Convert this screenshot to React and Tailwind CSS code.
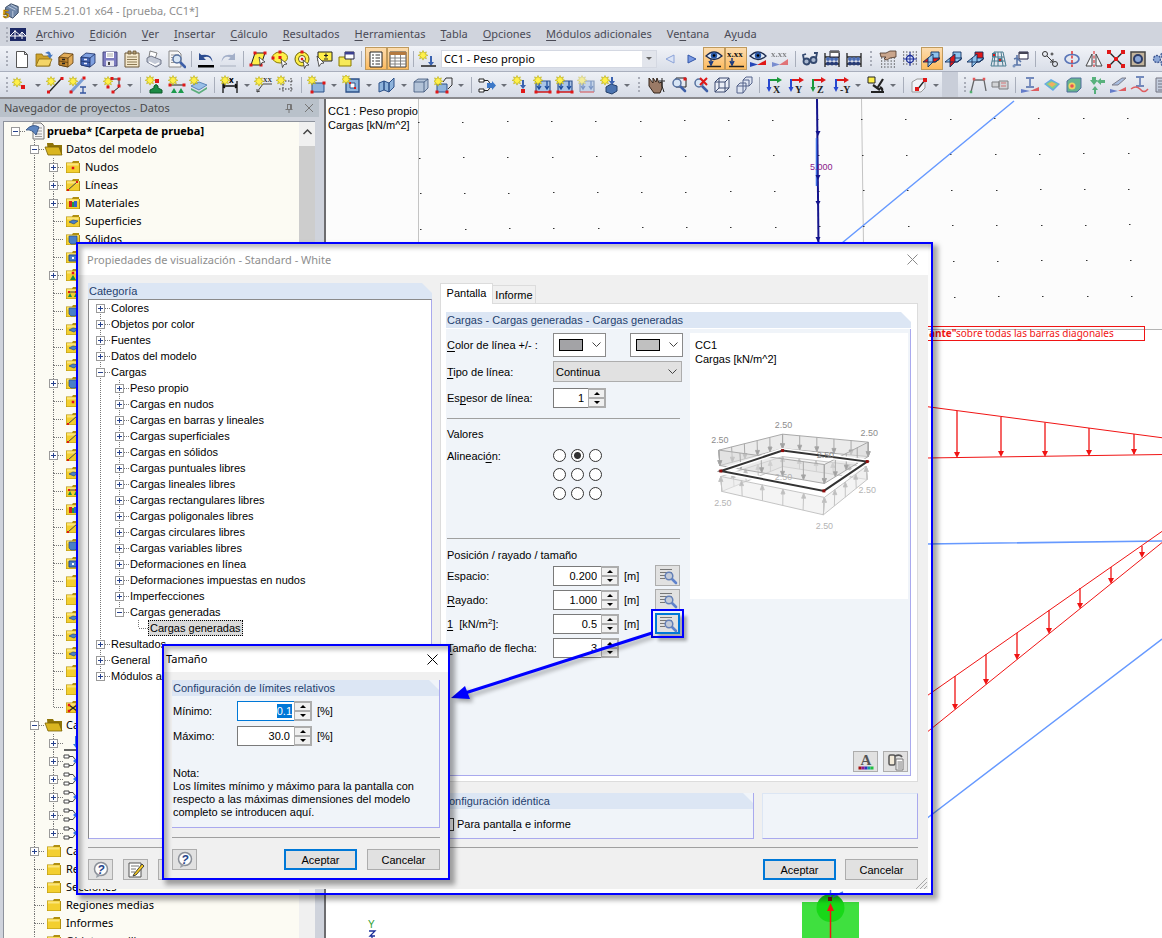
import { useEffect, useRef } from 'react';

/* ---------- small pieces shared by the icons ---------- */

const Star = ({ x = 5, y = 5 }) => (
  <g stroke="#b5a800" strokeWidth="0.6">
    <path
      d={`M${x} ${y - 4.5}l1 2.4 2.4-1-1 2.4 2.4 1-2.4 1 1 2.4-2.4-1-1 2.4-1-2.4-2.4 1 1-2.4-2.4-1 2.4-1-1-2.4 2.4 1z`}
      fill="#fff04a"
    />
  </g>
);

const Dot = ({ x, y, s = 3, c = '#e01818' }) => <rect x={x - s / 2} y={y - s / 2} width={s} height={s} fill={c} />;

const DownArrow = ({ x, y, h = 8, c = '#3a62b0' }) => (
  <path d={`M${x} ${y}v${h - 3}h2l-3 4-3-4h2v-${h - 3}z`} fill={c} />
);

const Folder = ({ children }) => (
  <>
    <path d="M3 5.500h6l1-1.500h6v2h1v10H3z" fill="#b08f10" />
    <path d="M3.500 6h12.500v9.500H3.500z" fill="#f3cf2f" />
    <path d="M4 6.500h11.500v2H4z" fill="#fae57c" />
    {children}
  </>
);

const Cube = ({ fill = '#7fa3cf' }) => (
  <g stroke="#3c5378" strokeWidth="0.8">
    <path d="M3 7l4-3h10v9l-4 4H3z" fill={fill} />
    <path d="M3 7h10v10M13 7l4-3" fill="none" />
  </g>
);

const Dots = ({ x = 3, y = 3 }) => (
  <path
    d={`M${x} ${y}h14M${x} ${y + 3}h14M${x} ${y + 6}h14M${x} ${y + 9}h14M${x} ${y + 12}h14`}
    stroke="#333"
    strokeWidth="1.2"
    strokeDasharray="1.200 2"
  />
);

const Planes = ({ flat = '#8fc4ee', side = '#8fc4ee', front = '#8fc4ee' }) => (
  <g stroke="#12305e" strokeWidth="0.9">
    <path d="M9 3h8v8H9z" fill={front} />
    <path d="M1 13l5-4h12l-5 4z" fill={flat} />
    <path d="M6 9l5-4v8l-5 5z" fill={side} />
    <path d="M6 13h8l3-3" fill="none" />
  </g>
);

const Lens = ({ x = 9, y = 8 }) => (
  <>
    <path d={`M${x + 3} ${y + 3}l5 5`} stroke="#3d5fa8" strokeWidth="2.600" strokeLinecap="round" />
    <circle cx={x} cy={y} r="4" fill="#d8e6f5" stroke="#56719f" strokeWidth="1.500" />
  </>
);

const Eye = ({ y = 7 }) => (
  <>
    <path d={`M2 ${y}q8-8 16 0q-8 7-16 0z`} fill="#dfeaf8" stroke="#1d2c50" strokeWidth="1.300" />
    <circle cx="10" cy={y - 0.5} r="3.200" fill="#2858a8" />
    <circle cx="10" cy={y - 0.5} r="1.300" fill="#000" />
  </>
);

const Axes = ({ label, right, down }) => (
  <>
    <path d="M4 4h9v-2l5 3-5 3v-2H4z" fill={right} />
    <path d="M4 4h2v8h1.500l-2.500 5-2.500-5H4z" fill={down} />
    <text x="9" y="18" fontSize="10" fontFamily="Liberation Serif, serif" fontWeight="bold" fill="#222">
      {label}
    </text>
  </>
);

const LoadFrame = ({ faded }) => (
  <g opacity={faded ? 0.5 : 1}>
    <path d="M3 17V6h14v11" fill="#a9c4e6" stroke="#35568c" strokeWidth="1.200" />
    <path d="M6 6v7m-2-2l2 3 2-3M14 6v7m-2-2l2 3 2-3" stroke="#1c4da0" strokeWidth="1.300" fill="none" />
    <path d="M3 17h14" stroke="#d01818" strokeWidth="1.500" />
    <Star x={5} y={5} />
    {!faded && <Dot x={3} y={17} />}
    {!faded && <Dot x={17} y={17} />}
  </g>
);

const Abacus = () => (
  <>
    <path d="M3 4v14M17 4v14M3 8h14M3 15h14" stroke="#222" strokeWidth="1.300" />
    {[6, 10, 14].map((x) => (
      <g key={x}>
        <circle cx={x} cy="10" r="2" fill="#4a6cb4" />
        <circle cx={x} cy="14.500" r="2" fill="#273c78" />
      </g>
    ))}
  </>
);

const icons = {
  new: <path d="M4.500 2.500h8l3 3v13h-11zM12.500 2.500v3h3" fill="#fff" stroke="#555" />,
  open: (
    <>
      <path d="M2 5h6l1 2h7v10H2z" fill="#cfa32c" stroke="#8a6a10" strokeWidth="0.800" />
      <path d="M2 17l3-7h13l-3 7z" fill="#f4d568" stroke="#8a6a10" strokeWidth="0.800" />
      <path d="M11 4q5-4 6 2l2-.5-3 4-3-3 2-.3q-1-2-4-2.200z" fill="#4679c2" />
    </>
  ),
  drawerBrown: (
    <g stroke="#5a3a0c" strokeWidth="0.800">
      <path d="M3 8l5-4 9 1v9l-5 4-9-2z" fill="#e2ac58" />
      <path d="M3 8l9 1v9l-9-2zM12 9l5-4M3 12l9 1.500" fill="#c08630" />
      <path d="M6 10.500h3M6 14.500h3" stroke="#222" strokeWidth="1.400" />
    </g>
  ),
  drawerBlue: (
    <g stroke="#1b2f66" strokeWidth="0.800">
      <path d="M3 8l5-4 9 1v9l-5 4-9-2z" fill="#7fa0e0" />
      <path d="M3 8l9 1v9l-9-2zM12 9l5-4M3 12l9 1.500" fill="#4466b4" />
      <path d="M6 10.500h3M6 14.500h3" stroke="#eef" strokeWidth="1.400" />
    </g>
  ),
  save: (
    <>
      <path d="M3 3h14v14H3z" fill="#7d7cc0" stroke="#4a4a80" />
      <path d="M6 3h8v6H6z" fill="#fff" />
      <path d="M7 5h6M7 7h6" stroke="#aaa" />
      <path d="M6 11.500h8V17H6z" fill="#e8e8f0" />
      <path d="M8 13h2v3H8z" fill="#444" />
    </>
  ),
  clipboard: (
    <>
      <path d="M3 4h14v14H3z" fill="#f4e8cc" stroke="#6a5636" />
      <path d="M6 2h3v3H6zM11 2h3v3h-3z" fill="#b09a70" stroke="#6a5636" strokeWidth="0.800" />
      <path d="M5 8h10M5 10.500h10M5 13h10M5 15.500h10" stroke="#8c7a55" />
    </>
  ),
  print: (
    <>
      <path d="M6 2l7 2-2 6-6-2z" fill="#fff" stroke="#666" strokeWidth="0.800" />
      <path d="M3 9l4-2 10 4v4l-5 3-9-5z" fill="#c3c9d6" stroke="#596075" strokeWidth="0.800" />
      <path d="M5 13l6 3 4-2" stroke="#fff" fill="none" strokeWidth="1.500" />
    </>
  ),
  preview: (
    <>
      <path d="M3 2h9l3 3v13H3z" fill="#f6f6f6" stroke="#888" />
      <path d="M5 6h8M5 8.500h8M5 11h5M5 13.500h5" stroke="#999" />
      <Lens x={11} y={10} />
    </>
  ),
  undo: (
    <>
      <path d="M3 4v7h7l-2.500-2.500q6-3 9 4.500q-.5-9-11-7z" fill="#2c4c90" />
      <path d="M2 16h16v2.500H2z" fill="#000" />
    </>
  ),
  redo: (
    <g opacity="0.700">
      <path d="M17 4v7h-7l2.500-2.500q-6-3-9 4.500q.5-9 11-7z" fill="#8797b8" />
      <path d="M2 16h16v2H2z" fill="#b9bfcc" />
    </g>
  ),
  selPara: (
    <>
      <path d="M7 4h10l-4 12H3z" fill="#fff04a" stroke="#222" />
      <Dot x={7} y={4} /><Dot x={17} y={4} /><Dot x={3} y={16} /><Dot x={13} y={16} />
      <path d="M11 8l6 5-3 .5-1.500 3z" fill="#fff" stroke="#333" strokeWidth="0.800" />
    </>
  ),
  selEllipse: (
    <>
      <ellipse cx="10" cy="8.500" rx="7.500" ry="5.500" fill="#fff04a" stroke="#8a7a00" />
      <Dot x={10} y={3} /><Dot x={3} y={9} /><Dot x={10} y={8.500} />
      <path d="M11 10l6 5-3 .5-1.500 3z" fill="#fff" stroke="#333" strokeWidth="0.800" />
    </>
  ),
  selRing: (
    <>
      <circle cx="10" cy="10" r="7" fill="#fff04a" stroke="#6a6000" />
      <circle cx="10" cy="10" r="3.500" fill="#fff" stroke="#6a6000" />
      <Dot x={10} y={3} /><Dot x={10} y={10} s={2.500} />
      <path d="M11 11l6 5-3 .5-1.500 3z" fill="#fff" stroke="#333" strokeWidth="0.800" />
    </>
  ),
  selNote: (
    <>
      <path d="M4 3h14v9H4z" fill="#fff04a" stroke="#222" />
      <path d="M12 4.500v4M10 6.500h4M10 10h4" stroke="#222" strokeWidth="1.200" />
      <path d="M3 7l7 7-3 .5-2 3z" fill="#fff" stroke="#333" strokeWidth="0.800" />
    </>
  ),
  yellowWin: (
    <>
      <path d="M3 8h12v9H3z" fill="#f6ea5a" stroke="#8a7a00" />
      <path d="M9 3h9v7H9z" fill="#fff" stroke="#224" />
      <path d="M9 3h9v2.500H9z" fill="#3a3f90" />
    </>
  ),
  listPane: (
    <>
      <path d="M4 3h12v15H4z" fill="#fff" stroke="#222" />
      <path d="M6 6h2m1.500 0H14M6 9h2m1.500 0H14M6 12h2m1.500 0H14M6 15h2m1.500 0H14" stroke="#333" />
    </>
  ),
  tablePane: (
    <>
      <path d="M2 3h16v15H2z" fill="#fff" stroke="#444" />
      <path d="M2 3h16v3H2z" fill="#b47a40" />
      <path d="M2 9h16M2 12h16M2 15h16M7 6v12M12.500 6v12" stroke="#777" strokeWidth="0.900" />
    </>
  ),
  starLoad: (
    <>
      <Star x={5} y={6} />
      <DownArrow x={14} y={7} h={9} />
      <path d="M3 17h15" stroke="#222" strokeWidth="1.500" />
    </>
  ),
  prev: <path d="M14 6v8L6 10z" fill="#dbe4f6" stroke="#8aa2d8" />,
  next: <path d="M6 6v8l8-4z" fill="#7a9ae4" stroke="#3256a8" />,
  eyeLoad: (
    <>
      <Eye />
      <path d="M7 10v4m-2-2l2 4 2-4" stroke="#1c3c80" strokeWidth="1.500" fill="none" />
      <path d="M3 17.500h14" stroke="#222" strokeWidth="1.500" />
    </>
  ),
  valueLoad: (
    <>
      <text x="1" y="8" fontSize="9" fontWeight="bold" fontFamily="Liberation Serif, serif" fill="#111">x.xx</text>
      <path d="M6 9v5m-2-2l2 4 2-4" stroke="#1c3c80" strokeWidth="1.500" fill="none" />
      <path d="M3 17.500h15" stroke="#222" strokeWidth="1.500" />
    </>
  ),
  eyeResult: (
    <>
      <Eye />
      <path d="M2 13v5l8-2.500z" fill="#2647b8" />
      <path d="M18 11v5h-9z" fill="#e01818" />
    </>
  ),
  valueResult: (
    <g opacity="0.550">
      <text x="1" y="8" fontSize="9" fontWeight="bold" fontFamily="Liberation Serif, serif" fill="#333">x.xx</text>
      <path d="M2 13v5l8-2.500z" fill="#2647b8" />
      <path d="M18 10v6h-9z" fill="#e01818" />
    </g>
  ),
  glasses: (
    <g fill="#a9b8d0" stroke="#34496f" strokeWidth="1.800">
      <circle cx="6.500" cy="12.500" r="3" />
      <circle cx="13.500" cy="11" r="3" />
      <path d="M4 11l-1-5 3-1M16 9l1-5-3 0M9 11.500h2" fill="none" />
    </g>
  ),
  abacusDlg: (
    <>
      <Abacus />
      <path d="M8 2h9v6H8z" fill="#fff" stroke="#223" />
      <path d="M8 2h9v2H8z" fill="#666" />
    </>
  ),
  abacus: <Abacus />,
  handGrid: (
    <>
      <Dots y={6} />
      <path d="M2 4h6l4-2h6v6l-6 1-3 2-3-1 2-2H3z" fill="#c9a58c" stroke="#4a3426" strokeWidth="0.800" />
    </>
  ),
  grid: (
    <>
      <Dots />
      <circle cx="10" cy="10" r="3.500" fill="#dfe8ff" stroke="#1c2f9a" strokeWidth="1.300" />
      <path d="M10 3v14M3 10h14" stroke="#1c2f9a" />
    </>
  ),
  planeXY: <Planes flat="#e01818" />,
  planeXZ: <Planes side="#e01818" />,
  planeYZ: <Planes front="#e01818" />,
  gridPlane: (
    <g stroke="#4a7c90" fill="none">
      <path d="M6 3h9l3 14H3zM5 8h11M4 12h13M10 3v14M13 3l2 14M7 3l-1 14" />
      <Dot x={6} y={6} /><Dot x={12} y={11} />
    </g>
  ),
  nodeDlg: (
    <>
      <path d="M9 3h9v7H9z" fill="#fff" stroke="#224" />
      <path d="M9 3h9v2H9z" fill="#445" />
      <path d="M7 6v10M4 10l3-1 4 4M4 16h7" stroke="#5a76a8" strokeWidth="1.600" fill="none" />
      <circle cx="4" cy="17" r="1.500" fill="#7a92bc" />
    </>
  ),
  moveCopy: (
    <g fill="none" stroke="#333">
      <circle cx="5" cy="5" r="2.500" /><circle cx="12" cy="5" r="1" /><circle cx="15" cy="15" r="2.500" />
      <path d="M7 7l6 6m0-3v3h-3" />
    </g>
  ),
  rotate: (
    <>
      <ellipse cx="10" cy="10" rx="7" ry="4.500" fill="none" stroke="#5a76b8" strokeWidth="1.700" />
      <path d="M10 2v16" stroke="#e01818" strokeWidth="1.300" strokeDasharray="3 1.500" />
    </>
  ),
  mirror: (
    <>
      <path d="M8 5v12H2zM12 5v12h6z" fill="#f4f6fa" stroke="#444" />
      <path d="M10 2v16" stroke="#e01818" strokeDasharray="3 1.500" />
    </>
  ),
  cross: (
    <>
      <path d="M3 3l14 14M17 3L3 17" stroke="#222" strokeWidth="1.400" />
      <Dot x={3} y={3} s={4} /><Dot x={17} y={3} s={4} /><Dot x={3} y={17} s={4} /><Dot x={17} y={17} s={4} /><Dot x={10} y={10} s={4} />
    </>
  ),
  gearBox: (
    <>
      <path d="M3 3h14v14H3z" fill="#c3b49c" stroke="#444" strokeWidth="1.500" />
      <circle cx="10" cy="10" r="4" fill="#8ca8d8" stroke="#2c3c68" strokeWidth="2" />
    </>
  ),
  gears: (
    <g fill="#8ca8d8" stroke="#3c5590" strokeWidth="1.300" strokeDasharray="2 1">
      <circle cx="7" cy="10" r="3.500" /><circle cx="14" cy="6" r="3" /><circle cx="14" cy="14" r="3" />
    </g>
  ),

  newNode: <><Star x={6} y={7} /><Dot x={12} y={12} s={4} /></>,
  newLine: <><path d="M4 17L17 3" stroke="#222" strokeWidth="1.300" /><Star x={6} y={6} /><Dot x={3.500} y={17} /><Dot x={17} y={3.500} /></>,
  newMember: (
    <>
      <path d="M3 17L15 4" stroke="#7b9fd6" strokeWidth="3" />
      <Star x={5} y={6} /><Dot x={3} y={17} /><Dot x={16} y={3} />
      <path d="M12 12h6M12 18h6M15 12v6" stroke="#3556a0" strokeWidth="1.300" />
    </>
  ),
  newPolyline: (
    <>
      <path d="M8 4h8v8l-6 5" stroke="#222" fill="none" />
      <Star x={5} y={6} /><Dot x={9} y={3.500} /><Dot x={16} y={4} /><Dot x={16} y={11} /><Dot x={10} y={17} /><Dot x={5} y={12} />
    </>
  ),
  support: <><path d="M9 11q2-3 4 0v2l4 2v3H5v-3l4-2z" fill="#1c8a44" stroke="#0c5a28" /><Dot x={12} y={6} s={4} /><Star x={5} y={5} /></>,
  lineSupport: <><path d="M2 10h16" stroke="#222" /><Dot x={3} y={10} /><Dot x={17} y={10} /><path d="M4 18l3-5 3 5zM11 18l3-5 3 5z" fill="#1c9a4c" /><Star x={6} y={5} /></>,
  surfSupport: <><path d="M2 11l8-4 8 3-8 5z" fill="#9ac0e8" stroke="#5c86b8" /><path d="M2 13l8 4 8-5v2l-8 5-8-4z" fill="#5cae7c" /><Star x={5} y={5} /></>,
  dimension: <><path d="M3 6v12M17 6v12M3 11h14M5 9l-2 2 2 2M15 9l2 2-2 2" stroke="#111" fill="none" strokeWidth="1.300" /><text x="9" y="8" fontSize="8" fontWeight="bold">x</text><Star x={5} y={5} /></>,
  comment: <><path d="M3 17l6-8h9M3 17v-3M3 17l3-1" stroke="#444" fill="none" /><text x="9" y="7" fontSize="9" fontFamily="Liberation Serif, serif">xx</text><Star x={5} y={6} /></>,
  guide: <><path d="M7 3v15M15 3v15M3 6h15M3 14h15" stroke="#333" strokeDasharray="1.500 1.500" /><Star x={5} y={5} /></>,
  newSurface: <><path d="M5 8h12v9H5z" fill="#8fb4dc" stroke="#2c5088" /><Dot x={5} y={17} /><Dot x={17} y={8} /><Star x={5} y={5} /></>,
  opening: <><path d="M4 4h13v13H4z" fill="#8fb4dc" stroke="#2c5088" strokeWidth="1.300" /><path d="M8 8h5v5H8z" fill="#fff" stroke="#2c5088" /><Dot x={8} y={8} s={2} /><Dot x={13} y={13} s={2} /><Star x={4} y={4} /></>,
  shells: <><path d="M2 8l5-2v9l-5 2zM7 6l5 2v9l-5-2zM12 8l5-5v9l-5 5z" fill="#8fb4dc" stroke="#2c5088" /></>,
  solid: <Cube fill="#b3c3d8" />,
  newSolid: <><path d="M3 9h10v8H3z" fill="#8fb4dc" stroke="#2c5088" /><path d="M9 7l3-4h6v7l-4 4" fill="none" stroke="#333" /><Dot x={3} y={17} /><Dot x={13} y={17} /><Star x={4} y={6} /></>,
  connect: <><path d="M2 4h5v3H2zM2 14h5v3H2zM7 5.500h4l2 3M7 15.500h4l2-3" fill="#fff" stroke="#222" /><path d="M10 8h5V6l4 4.500-4 4.500v-2h-5z" fill="#3c78c8" /></>,
  nodeLoad: <><Star x={6} y={5} /><DownArrow x={13} y={5} h={8} /><Dot x={12} y={16} s={4} /></>,
  lineLoad: <LoadFrame />,
  surfLoad: <LoadFrame />,
  freeLoad: <LoadFrame faded />,
  solidLoad: <><path d="M6 12l5-3 6 2v5l-5 3-6-2z" fill="#4c74b0" stroke="#24406c" /><DownArrow x={13} y={2} h={7} /><Star x={5} y={5} /></>,
  hand: <><path d="M3 3l4 5 0-5 3 4 1-4 2 5 3-1v6l-2 5H8L3 11z" fill="#9a7a66" stroke="#33241a" /><path d="M16 3v8M13 6h6M16 11l2 6" stroke="#222" /></>,
  zoomWin: <><path d="M8 3h10v9H8z" fill="none" stroke="#222" /><Lens /><Dot x={17} y={4} /></>,
  zoomOff: <><Lens /><path d="M10 3l7 7M17 3l-7 7" stroke="#e01818" strokeWidth="2" /></>,
  wireCube: <g fill="#e9edf6" stroke="#3c4a70"><path d="M3 7l4-4h10v10l-4 4H3z" /><path d="M3 7h10v10M13 7l4-4M7 3v10h10M7 13l-4 4" fill="none" /></g>,
  cubes: <g fill="#dfe5f2" stroke="#55638a"><path d="M9 5l3-3h6v6l-3 3H9zM9 5h6v6M3 11l3-3h6v6l-3 4H3zM3 11h6v7" /></g>,
  axisX: <Axes label="X" right="#1c9a3c" down="#2848d0" />,
  axisY: <Axes label="Y" right="#e01818" down="#2848d0" />,
  axisZ: <Axes label="Z" right="#e01818" down="#1c9a3c" />,
  axisMY: <Axes label="-Y" right="#e01818" down="#2848d0" />,
  lamp: <><path d="M17 4l-5 8M7 10l7 5M5 17h13M14 12q3 2 2 4" stroke="#222" strokeWidth="2.200" fill="none" /><path d="M2 2h7v6H2z" fill="#fff04a" stroke="#222" /></>,
  clip: <><path d="M3 7l5-3h8v9l-4 4H3z" fill="#f2f4f8" stroke="#999" /><path d="M8 15l8-10" stroke="#222" strokeWidth="1.300" /><Dot x={16} y={5} s={4} /><Dot x={8} y={14} s={4} /></>,
  section: <g opacity="0.700"><path d="M3 17L6 5h10l2 11" fill="none" stroke="#333" strokeWidth="1.300" /><Dot x={6} y={4} s={2.500} /><Dot x={16} y={4} s={2.500} /><Dot x={3} y={17} s={2.500} c="#1c9a3c" /></g>,
  panel: <g opacity="0.700"><path d="M2 7h7v5H2zM9 6h9v8H9z" fill="#ccc" stroke="#555" /><path d="M11 8h5M11 11h5" stroke="#c44" /></g>,
  memberRes: <g opacity="0.650"><path d="M6 3h8M6 12h8M10 3v9" stroke="#3556a0" strokeWidth="1.800" /><path d="M1 14v4l9-2z" fill="#2647b8" /><path d="M19 12v4h-9z" fill="#e01818" /></g>,
  surfRes: <g opacity="0.800"><path d="M2 9l7-5 9 5-7 7z" fill="#4a9ae0" /><path d="M4 9l5-3 7 3-5 5z" fill="#6ad06a" /><path d="M6 9l4-2 4 2-4 3z" fill="#f4a040" /></g>,
  solidRes: <g opacity="0.800"><path d="M3 6l4-3h10v10l-4 4H3z" fill="#48a878" stroke="#2c5088" /><circle cx="8" cy="11" r="3.500" fill="#f4d040" /><circle cx="8" cy="11" r="1.800" fill="#e83030" /></g>,
  support2: <g opacity="0.700" fill="#1c9a4c"><path d="M6 2h4v3h2l-4 5-4-5h2zM9 11l3 4h-2v4H8v-4H6zM19 5v3h-4v2l-4-3.500 4-3.500v2z" /></g>,
  sectRes: <g opacity="0.650"><path d="M4 10l10-7h4l-8 7z" fill="#8aa8d8" stroke="#445" /><path d="M2 14v4l8-2z" fill="#2647b8" /><path d="M18 12v4h-8z" fill="#e01818" /></g>,
  barRes: <g opacity="0.650"><path d="M6 2h8M6 11h8M10 2v9" stroke="#3556a0" strokeWidth="1.800" /><path d="M1 14q5-4 9 0q4 5 8 0" fill="none" stroke="#e01818" strokeWidth="1.500" /></g>,
  report: <g opacity="0.700"><path d="M4 3h13v14H4z" fill="#b8c4d8" stroke="#445" /><path d="M6 6h9M6 9h9M6 12h9M6 15h9" stroke="#445" /></g>,

  help: (
    <>
      <circle cx="10" cy="9" r="6.500" fill="#fdfdfd" stroke="#8a8f98" strokeWidth="1.500" />
      <path d="M6 14l-1 4 5-2.500z" fill="#9aa0a8" />
      <text x="10" y="13.500" fontSize="12" fontWeight="bold" fontStyle="italic" textAnchor="middle" fill="#26458c" fontFamily="Liberation Sans, sans-serif">?</text>
    </>
  ),
  edit: (
    <>
      <path d="M3 3h12v14H3z" fill="#fff" stroke="#555" />
      <path d="M5 6h8M5 9h5M5 12h4" stroke="#777" />
      <path d="M8 14l8-10 2 2-8 9-3 1z" fill="#f4c820" stroke="#333" strokeWidth="0.900" />
    </>
  ),
  details: (
    <>
      <path d="M2 3.500h12M2 6.500h12M2 9.500h6M2 12.500h5" stroke="#777" />
      <path d="M14 13l4 4" stroke="#5f83cc" strokeWidth="2.600" strokeLinecap="round" />
      <circle cx="11" cy="10" r="3.800" fill="#c4cbd8" stroke="#6480b8" strokeWidth="1.500" />
    </>
  ),
  fontColors: (
    <>
      <text x="10" y="13" fontSize="15" fontWeight="bold" textAnchor="middle" fill="#555" fontFamily="Liberation Serif, serif">A</text>
      <Dot x={4} y={16} c="#a01010" /><Dot x={7} y={16} c="#901890" /><Dot x={10} y={16} c="#3030c0" /><Dot x={13} y={16} c="#10a0a0" /><Dot x={16} y={16} c="#20c040" />
    </>
  ),
  copyPage: (
    <>
      <rect x="3" y="3" width="6" height="10" rx="1.500" fill="#f2ead8" stroke="#555" strokeWidth="1.500" />
      <path d="M9 4q5-2 7 1" fill="none" stroke="#555" strokeWidth="1.800" />
      <path d="M10 7h7v11h-7z" fill="#fff" stroke="#777" />
      <path d="M11.500 10H16M11.500 12H16M11.500 14H16M11.500 16H16" stroke="#777" />
    </>
  ),

  doc: (
    <>
      <path d="M8 2h8l3 3v13H8z" fill="#f4f4f4" stroke="#777" />
      <path d="M10 7h7M10 10h7M10 13h7M10 15.500h7" stroke="#999" />
      <path d="M1 9q6-7 13-3l-3 8q-4-6-10-5z" fill="#5d86c0" stroke="#2a4878" strokeWidth="0.800" />
    </>
  ),
  folderOpen: (
    <>
      <path d="M3 4h6l1 2h8v10H4z" fill="#8f7408" />
      <path d="M1 8h14l3 8H4z" fill="#d9b520" stroke="#7a6206" strokeWidth="0.800" />
    </>
  ),
  folder: <Folder />,
  fNode: <Folder><Dot x={10} y={11} s={2.500} /></Folder>,
  fLine: <Folder><path d="M5 15l9-8" stroke="#444" /><Dot x={5} y={15} s={2} /><Dot x={14} y={7} s={2} /></Folder>,
  fMat: <Folder><path d="M6 8h3v6H6z" fill="#d02020" /><path d="M9 9h3v5H9z" fill="#209a40" /><path d="M11 8h3v6h-3z" fill="#3060d0" /></Folder>,
  fSurf: <Folder><path d="M6 11l4-2 5 1-4 3z" fill="#4a80c8" stroke="#244a88" strokeWidth="0.700" /></Folder>,
  fSolid: <Folder><path d="M6 7h8v6l-2 2H8l-2-2z" fill="#4a80c8" stroke="#244a88" strokeWidth="0.700" /></Folder>,
  fOpening: <Folder><path d="M6 8h8v6H6z" fill="#4a80c8" stroke="#244a88" /><path d="M9 10h2v2H9z" fill="#fff" /></Folder>,
  fSupport: <Folder><Dot x={10} y={8} s={2.500} /><path d="M7 15l3-5 3 5z" fill="#1c8a44" /></Folder>,
  fLineSup: <Folder><path d="M5 9h10" stroke="#444" /><path d="M5 14l2-4 2 4zM11 14l2-4 2 4z" fill="#1c8a44" /><Dot x={6} y={9} s={2} /><Dot x={13} y={9} s={2} /></Folder>,
  fCross: <Folder><path d="M6 8l8 6M14 8l-8 6" stroke="#222" strokeWidth="1.200" /><Dot x={6} y={8} s={2.500} /><Dot x={14} y={8} s={2.500} /><Dot x={6} y={14} s={2.500} /><Dot x={14} y={14} s={2.500} /></Folder>,
  combo: (
    <>
      <path d="M1 4h5v3H1zM1 13h5v3H1zM6 5.500h4l2 3M6 14.500h4l2-3" fill="#fff" stroke="#444" />
      <path d="M10 10l6-5v10z" fill="#3c78e0" />
    </>
  ),
  loadCase: <><DownArrow x={14} y={3} h={11} c="#3c78e0" /><path d="M1 17h18" stroke="#333" strokeWidth="1.500" /></>,
};

const Icon = ({ name }) => (
  <svg viewBox="0 0 20 20" className="size-5 shrink-0" aria-hidden="true">
    {icons[name]}
  </svg>
);

/* ---------- toolbars ---------- */

const Grip = ({ wide }) => (
  <span className={wide ? 'flex w-3 shrink-0 justify-center' : 'flex w-[9px] shrink-0 justify-center pl-1'}>
    <span className="h-[15px] border-l-2 border-dotted border-[#a9adb8]" />
  </span>
);

const Sep = () => (
  <span className="flex w-2 shrink-0 justify-center">
    <span className="h-4 w-px bg-[#a8aebb]" />
  </span>
);

const Tool = ({ name, active }) => (
  <button
    type="button"
    aria-label={name}
    className={
      active
        ? 'flex h-[23px] w-[22px] shrink-0 items-center justify-center border border-[#c09a5c] bg-linear-to-b from-[#fcdcae] to-[#fdbb5d]'
        : 'flex h-[23px] w-[22px] shrink-0 items-center justify-center'
    }
  >
    <Icon name={name} />
  </button>
);

const MenuTool = ({ name }) => (
  <button type="button" aria-label={name} className="flex h-[23px] w-[35px] shrink-0 items-center pl-0.5">
    <Icon name={name} />
    <span className="mt-0.5 ml-1 border-x-[3px] border-t-[3px] border-x-transparent border-t-[#6b6f78]" />
  </button>
);

// "|" is a separator, a trailing "*" marks a pressed button, ">" one with a menu
const Tools = ({ list }) =>
  list.split(' ').map((t, i) => {
    if (t === '|') return <Sep key={i} />;
    if (t.endsWith('>')) return <MenuTool key={i} name={t.slice(0, -1)} />;
    if (t.endsWith('*')) return <Tool key={i} name={t.slice(0, -1)} active />;
    return <Tool key={i} name={t} />;
  });

const Key = ({ text, at = 0 }) => (
  <>
    {text.slice(0, at)}
    <span className="underline underline-offset-2">{text[at]}</span>
    {text.slice(at + 1)}
  </>
);

const menus = [
  ['Archivo', 0],
  ['Edición', 0],
  ['Ver', 0],
  ['Insertar', 0],
  ['Cálculo', 0],
  ['Resultados', 0],
  ['Herramientas', 0],
  ['Tabla', 0],
  ['Opciones', 0],
  ['Módulos adicionales', 0],
  ['Ventana', 2],
  ['Ayuda', 1],
];

const Header = () => (
  <header className="shrink-0 border-b-2 border-[#8b8b8f] text-[11px]">
    <div className="flex h-[22px] items-center gap-[3px] bg-white pl-0.5 text-[#8e8e8e]">
      <svg viewBox="0 0 20 20" className="size-[18px]" aria-hidden="true">
        <path d="M4 6l6-4 8 3v7l-6 6-8-4z" fill="#6f86a8" stroke="#34465f" />
        <path d="M7 5l8 4M10 3l7 4M12 10v7" stroke="#c3d0e2" />
        <text x="1" y="18" fontSize="13" fontWeight="bold" fill="#f0b400" stroke="#5a4000" strokeWidth="0.500" fontFamily="Liberation Sans, sans-serif">5</text>
      </svg>
      <span>RFEM 5.21.01 x64 - [prueba, CC1*]</span>
    </div>
    <nav className="flex h-6 items-center gap-[15px] bg-[#d0d4dd] text-[#4a4a55]">
      <span className="mr-[-5px] flex items-center gap-px">
        <Grip />
        <svg viewBox="0 0 16 13" className="h-[13px] w-4" aria-hidden="true">
          <rect width="16" height="13" fill="#1e2a66" />
          <path d="M0 8h16M5 2v9M5 3l-5 5M5 3l6 5M12 4v7M12 4l4 4M12 4L9 8" stroke="#fff" fill="none" />
        </svg>
      </span>
      {menus.map(([text, at]) => (
        <button key={text} type="button" className="shrink-0">
          <Key text={text} at={at} />
        </button>
      ))}
    </nav>
    <div className="flex h-[26px] items-center border-b border-[#a9afbd] bg-linear-to-b from-[#f1f3f8] to-[#d9dee8]">
      <Grip />
      <span className="w-0.5 shrink-0" />
      <Tools list="new open drawerBrown drawerBlue save clipboard print preview | undo redo | selPara selEllipse selRing selNote yellowWin | listPane* tablePane* | starLoad" />
      <span className="ml-0.5 grid h-[18px] w-[216px] shrink-0 grid-cols-[1fr_14px] border border-[#d4d8e2] bg-white">
        <select aria-label="Caso de carga" className="col-span-2 col-start-1 row-start-1 appearance-none px-0.5 text-black">
          <option>CC1 - Peso propio</option>
        </select>
        <span className="pointer-events-none col-start-2 row-start-1 flex items-center justify-center bg-[#e2e5ec]">
          <span className="border-x-[3px] border-t-[3px] border-x-transparent border-t-[#666]" />
        </span>
      </span>
      <span className="w-0.5 shrink-0" />
      <Tools list="prev next eyeLoad* valueLoad* eyeResult valueResult | glasses abacusDlg abacus" />
      <Grip wide />
      <Tools list="handGrid grid planeXY* planeXZ planeYZ gridPlane nodeDlg | moveCopy rotate mirror cross gearBox gears" />
    </div>
    <div className="flex h-[25px] items-center bg-[#c9ced9]">
      <div className="flex h-full items-center bg-linear-to-b from-[#eef1f6] to-[#d6dbe6]">
        <Grip />
        <Tools list="newNode> newLine newMember> newPolyline> | support lineSupport surfSupport | dimension> comment guide | newSurface> opening> shells> solid newSolid> | connect> nodeLoad lineLoad surfLoad freeLoad solidLoad>" />
        <Grip wide />
        <Tools list="hand zoomWin zoomOff wireCube cubes | axisX axisY axisZ axisMY> lamp> | clip>" />
      </div>
      <div className="ml-4 flex h-full flex-1 items-center overflow-hidden bg-linear-to-b from-[#eef1f6] to-[#d6dbe6]">
        <Grip />
        <Tools list="section panel | memberRes surfRes solidRes support2 sectRes barRes report" />
      </div>
    </div>
  </header>
);

/* ---------- trees ---------- */

// one 19px column of tree guides: an optional box with + or -, dotted lines up, down and right
const Twig = ({ h, box, up = true, down = true, right = true }) => {
  const m = h / 2;
  return (
    <svg viewBox={`0 0 19 ${h}`} width="19" height={h} className="shrink-0" shapeRendering="crispEdges" aria-hidden="true">
      <g stroke="#777" strokeDasharray="1 1">
        {up && <path d={`M9.500 0V${m}`} />}
        {down && <path d={`M9.500 ${m}V${h}`} />}
        {right && <path d={`M10 ${m + 0.5}H19`} />}
      </g>
      {box && (
        <>
          <rect x="5.500" y={m - 3.5} width="8" height="8" fill="#fff" stroke="#9a9a9a" />
          <path d={box === '+' ? `M7 ${m + 0.5}h5M9.500 ${m - 2}v5` : `M7 ${m + 0.5}h5`} stroke="#26418c" />
        </>
      )}
    </svg>
  );
};

const hidden = (icon, box) => ({ level: 2, icon, box });

const navRows = [
  { level: 0, icon: 'doc', box: '-', text: 'prueba* [Carpeta de prueba]', bold: true },
  { level: 1, icon: 'folderOpen', box: '-', text: 'Datos del modelo' },
  { level: 2, icon: 'fNode', box: '+', text: 'Nudos' },
  { level: 2, icon: 'fLine', box: '+', text: 'Líneas' },
  { level: 2, icon: 'fMat', box: '+', text: 'Materiales' },
  { level: 2, icon: 'fSurf', text: 'Superficies' },
  { level: 2, icon: 'fSolid', text: 'Sólidos' },
  hidden('fOpening'),
  hidden('fSupport', '+'),
  hidden('fLineSup'),
  hidden('fSolid'),
  hidden('fSurf'),
  hidden('fSurf'),
  hidden('fSurf'),
  hidden('fSolid', '+'),
  hidden('fNode'),
  hidden('fLine'),
  hidden('fLine'),
  hidden('fLine', '+'),
  hidden('fSurf'),
  hidden('fLineSup'),
  hidden('fMat'),
  hidden('fLine'),
  hidden('fSolid'),
  hidden('fOpening'),
  hidden('folder'),
  hidden('folder'),
  hidden('fSurf'),
  hidden('fSurf'),
  hidden('fSurf'),
  hidden('folder'),
  hidden('folder'),
  { ...hidden('fCross'), last: true },
  { level: 1, icon: 'folderOpen', box: '-', text: 'Casos de carga' },
  hidden('loadCase', '+'),
  hidden('combo', '+'),
  hidden('combo', '+'),
  hidden('combo', '+'),
  hidden('combo', '+'),
  { ...hidden('combo', '+'), last: true },
  { level: 1, icon: 'folder', box: '+', text: 'Cargas' },
  { level: 1, icon: 'folder', text: 'Resultados' },
  { level: 1, icon: 'folder', text: 'Secciones' },
  { level: 1, icon: 'folder', text: 'Regiones medias' },
  { level: 1, icon: 'folder', text: 'Informes' },
  { level: 1, icon: 'folder', text: 'Objetos auxiliares' },
];

const Navigator = () => (
  <aside className="flex w-[324px] shrink-0 flex-col bg-[#cfd3dc] pr-[5px] text-[11px]">
    <div className="flex h-[18px] shrink-0 items-center bg-[#b9c1ca] pl-1 text-[#4a4a4a]">
      <h2 className="flex-1">Navegador de proyectos - Datos</h2>
      <button type="button" aria-label="Fijar" className="mr-1 flex size-4 items-center justify-center">
        <svg viewBox="0 0 10 10" className="size-[10px]" fill="none" stroke="#777" aria-hidden="true">
          <path d="M3 1.500h4.500v4.500M3.500 1.500V6M6.500 1.500V6M1.500 6.500h7M5 6.500V10" />
        </svg>
      </button>
      <button type="button" aria-label="Cerrar panel" className="mr-0.5 flex size-4 items-center justify-center">
        <svg viewBox="0 0 10 10" className="size-[10px]" stroke="#777" aria-hidden="true">
          <path d="M1 1l8 8M9 1L1 9" />
        </svg>
      </button>
    </div>
    <div className="mt-1 mr-1 ml-[3px] flex min-h-0 flex-1 border-t border-l border-[#8d929c] bg-[#fcfbf3]">
      <ul className="min-w-0 flex-1 overflow-hidden pl-0.5 whitespace-nowrap text-black">
        {navRows.map((r, i) => (
          <li key={i} className="flex h-[18px] items-center">
            {r.level > 0 && <Twig h={18} up={false} down={false} right={false} />}
            {r.level > 1 && <Twig h={18} right={false} />}
            <Twig h={18} box={r.box} up={r.level > 0} down={!r.last && r.level > 0} />
            <span className="flex w-[19px] shrink-0 justify-center">
              <Icon name={r.icon} />
            </span>
            <span className={r.bold ? 'pl-[3px] font-bold' : 'pl-[3px]'}>{r.text}</span>
          </li>
        ))}
      </ul>
      <div className="w-4 shrink-0 bg-[#f0f0f0]">
        <svg viewBox="0 0 16 24" className="block h-6 w-4" fill="none" stroke="#444" strokeWidth="1.500" aria-hidden="true">
          <path d="M4.500 12l4-4 4 4" />
        </svg>
        <div className="h-[600px] bg-[#cdcdcd]" />
      </div>
    </div>
  </aside>
);

const branches = [
  [0, 'Colores', '+'],
  [0, 'Objetos por color', '+'],
  [0, 'Fuentes', '+'],
  [0, 'Datos del modelo', '+'],
  [0, 'Cargas', '-'],
  [1, 'Peso propio', '+'],
  [1, 'Cargas en nudos', '+'],
  [1, 'Cargas en barras y lineales', '+'],
  [1, 'Cargas superficiales', '+'],
  [1, 'Cargas en sólidos', '+'],
  [1, 'Cargas puntuales libres', '+'],
  [1, 'Cargas lineales libres', '+'],
  [1, 'Cargas rectangulares libres', '+'],
  [1, 'Cargas poligonales libres', '+'],
  [1, 'Cargas circulares libres', '+'],
  [1, 'Cargas variables libres', '+'],
  [1, 'Deformaciones en línea', '+'],
  [1, 'Deformaciones impuestas en nudos', '+'],
  [1, 'Imperfecciones', '+'],
  [1, 'Cargas generadas', '-'],
  [2, 'Cargas generadas'],
  [0, 'Resultados', '+'],
  [0, 'General', '+'],
  [0, 'Módulos adicionales', '+'],
];

const CategoryTree = () => (
  <ul className="flex-1 border border-t-[#8a8a8a] border-r-[#a9a9ee] border-b-[#a9a9ee] border-l-[#8a8a8a] bg-white pl-0.5 whitespace-nowrap">
    {branches.map(([level, text, box], i) => (
      <li key={i} className="flex h-4 items-center">
        {level > 0 && <Twig h={16} right={false} />}
        {level > 1 && <Twig h={16} up={false} down={false} right={false} />}
        <Twig h={16} box={box} up={i > 0} down={level < 2 && i < branches.length - 1 && text !== 'Cargas generadas'} />
        {level === 2 ? (
          <span className="border border-dotted border-black bg-[#d9d9d9] px-px leading-[14px]">{text}</span>
        ) : (
          <span className="pl-px">{text}</span>
        )}
      </li>
    ))}
  </ul>
);

/* ---------- drawing area ---------- */

const arrowHead = (x, y, s = 3) => `M${x - s} ${y - 2 * s}h${2 * s}l-${s} ${2 * s}z`;

const Canvas = () => (
  <main className="relative min-w-0 flex-1 overflow-hidden border-l-2 border-[#6d6d70] bg-white">
    <svg className="absolute inset-0 size-full" aria-hidden="true">
      <g transform="translate(-326 -99)">
        <rect x="326" y="99" width="2000" height="230" fill="#fcfcfc" />
        <path d="M418.500 99V245M861.500 99l2 146" stroke="#c4c4c4" />
        <path d="M925 329.500h2000" stroke="#b4b4b4" />
        {[0, 1, 2, 3, 4, 5].map((row) =>
          Array.from({ length: 17 }, (_, n) => (
            <rect key={`${row}-${n}`} x={Math.round(418 + n * 44.3 + row * 0.8)} y={Math.round(122 - n * 0.28 + row * 35.6)} width="1.500" height="1" fill="#333" />
          ))
        )}
        <path d="M1014 101L842 243M926 544l240-3M926 819l236-180" stroke="#6699ff" strokeWidth="1.500" fill="none" />
        <path d="M817 99l1.500 145" stroke="#14148c" strokeWidth="2" />
        <path d="M816.500 138v48" stroke="#3f6fe0" strokeWidth="1.500" />
        <path d={[136, 180, 206, 242].map((y) => arrowHead(818, y, 2.5)).join('')} fill="#14148c" />
        <text x="810" y="170" fontSize="9" fill="#8a1a8a" fontFamily="Liberation Sans, sans-serif">5.000</text>
        <g stroke="#f01414" fill="none">
          <path d="M926 406.500L1164 438M926 458l238-3.500" />
          <path d="M957 411v44M1001 417v38M1045 422.500v32M1089 428v26M1134 434v20" strokeWidth="1.300" />
          <path d="M926 696.500L1164 530M926 733l238-192" />
          <path d="M955 676v30M986 654v27M1017 633v23M1049 610v22M1080 588v19M1111 567v14M1142 546v9" strokeWidth="1.300" />
          <rect x="900.500" y="326.500" width="244" height="14" />
        </g>
        <path
          d={[[957, 458], [1001, 457], [1045, 457], [1089, 456], [1134, 455], [955, 710], [986, 685], [1017, 660], [1049, 634], [1080, 609], [1111, 584], [1142, 558]]
            .map(([x, y]) => arrowHead(x, y))
            .join('')}
          fill="#f01414"
        />
        <text x="955" y="337" fontSize="10" fill="#f01414" fontFamily="Noto Sans, sans-serif">
          <tspan x="929" fontWeight="bold">ante"</tspan>
          <tspan x="956">sobre todas las barras diagonales</tspan>
        </text>
        <rect x="802" y="902" width="57" height="60" fill="#3fe03f" />
        <circle cx="830.500" cy="908" r="14" fill="#18d818" />
        <path d="M830.500 890v10M833 897l10-5" stroke="#5080e0" strokeWidth="1.500" />
        <path d="M830.500 960V906" stroke="#f01414" strokeWidth="1.500" />
        <path d="M827 911h7l-3.500-8z" fill="#f01414" />
        <rect x="828" y="897" width="4" height="4" fill="#801010" />
        <text x="368" y="928" fontSize="10" fill="#2ca02c" fontFamily="Liberation Sans, sans-serif">Y</text>
        <path d="M369 931h6l-5 5h5M372 936v4" stroke="#1c2f9a" fill="none" strokeWidth="1.300" />
      </g>
    </svg>
    <p className="relative pt-[5px] pl-0.5 font-['Liberation_Sans',Arial,sans-serif] text-[11px] leading-[14px] text-black">
      CC1 : Peso propio
      <br />
      Cargas [kN/m^2]
    </p>
  </main>
);

/* ---------- dialog parts ---------- */

const GroupTitle = ({ children }) => (
  <h3 className="h-4 shrink-0 bg-[#dce6f4] pl-px leading-4 text-[#1f3f6e] [clip-path:polygon(0_0,calc(100%-10px)_0,100%_10px,100%_100%,0_100%)]">
    {children}
  </h3>
);

const Rule = () => <div className="h-px shrink-0 bg-[#a0a0a0]" />;

const IconButton = ({ name, label, framed }) => (
  <button
    type="button"
    aria-label={label}
    className={
      framed
        ? 'flex h-[21px] w-[25px] shrink-0 items-center justify-center border-2 border-[#0078d7] bg-[#e1e1e1] outline-2 outline-offset-2 outline-[#0000ff] shadow-[5px_5px_3px_2px_rgba(0,0,0,0.3)]'
        : 'flex h-[21px] w-[25px] shrink-0 items-center justify-center border border-[#adadad] bg-[#e1e1e1]'
    }
  >
    <Icon name={name} />
  </button>
);

const PushButton = ({ children, primary }) => (
  <button
    type="button"
    className={
      primary
        ? 'h-[21px] w-[73px] shrink-0 border-2 border-[#0078d7] bg-[#e1e1e1] leading-4'
        : 'h-[21px] w-[73px] shrink-0 border border-[#adadad] bg-[#e1e1e1] leading-4'
    }
  >
    {children}
  </button>
);

const CloseButton = ({ light }) => (
  <button type="button" aria-label="Cerrar" className="flex size-6 items-center justify-center">
    <svg viewBox="0 0 11 11" className="size-[11px]" stroke={light ? '#8a8a8a' : '#000'} aria-hidden="true">
      <path d="M0.500 0.500l10 10M10.500 0.500l-10 10" />
    </svg>
  </button>
);

const Spin = ({ id, value, size = 'w-[66px]', focused, inputRef }) => (
  <span className={`flex h-5 shrink-0 ${size}`}>
    <input
      id={id}
      ref={inputRef}
      defaultValue={value}
      className={
        focused
          ? 'w-full min-w-0 border border-r-0 border-[#0078d7] bg-white pr-0.5 text-right outline-none selection:bg-[#0078d7] selection:text-white'
          : 'w-full min-w-0 border border-r-0 border-[#7a7a7a] bg-white pr-1 text-right outline-none'
      }
    />
    <span className="flex w-[18px] shrink-0 flex-col border border-l-0 border-[#adadad] bg-white">
      <button type="button" aria-label="Aumentar" className="flex flex-1 items-center justify-center border border-[#adadad] bg-[#f0f0f0]">
        <span className="border-x-[3px] border-b-[3px] border-x-transparent border-b-black" />
      </button>
      <button type="button" aria-label="Reducir" className="flex flex-1 items-center justify-center border border-[#adadad] bg-[#f0f0f0]">
        <span className="border-x-[3px] border-t-[3px] border-x-transparent border-t-black" />
      </button>
    </span>
  </span>
);

const Chevron = () => (
  <svg viewBox="0 0 9 6" className="pointer-events-none mr-1 h-1.5 w-[9px] self-center justify-self-end [grid-area:1/1]" fill="none" stroke="#444" aria-hidden="true">
    <path d="M0.500 0.500l4 4 4-4" />
  </svg>
);

const ColorSelect = ({ id, label, swatch, name }) => (
  <span className="grid h-6 w-[53px] shrink-0 border border-[#8a8a8a] bg-white">
    <select id={id} aria-label={label} className="w-full appearance-none text-transparent [grid-area:1/1]">
      <option>{name}</option>
    </select>
    <span className={`pointer-events-none ml-[5px] h-3 w-6 self-center border border-black [grid-area:1/1] ${swatch}`} />
    <Chevron />
  </span>
);

const Frame = ({ children, place }) => (
  <section role="dialog" className={`absolute flex flex-col border-2 border-[#0000ff] shadow-[4px_4px_5px_1px_rgba(0,0,0,0.35)] ${place}`}>
    {children}
    <span className="pointer-events-none absolute inset-0 shadow-[inset_4px_4px_4px_rgba(0,0,0,0.25)]" />
  </section>
);

/* ---------- load preview ---------- */

const lerp = (a, b, t) => [a[0] + (b[0] - a[0]) * t, a[1] + (b[1] - a[1]) * t];

const LoadFace = ({ from, to, n = 5, flip }) => {
  const [a, b] = from;
  const [c, d] = to;
  const heads = Array.from({ length: n + 1 }, (_, i) => [lerp(a, b, i / n), lerp(c, d, i / n)]);
  return (
    <g stroke={flip ? '#c4c4c4' : '#a8a8a8'} fill={flip ? '#bdbdbd' : '#a0a0a0'}>
      <path d={`M${a}L${b}L${d}L${c}Z`} fill={flip ? '#ebebeb' : '#dadada'} fillOpacity="0.550" />
      {heads.map(([p, q], i) => (
        <g key={i}>
          <path d={`M${p}L${q}`} />
          <path d={flip ? `M${q}l-2 5h4z` : `M${q}l-2-5h4z`} />
        </g>
      ))}
    </g>
  );
};

const L = [722, 471.5];
const T = [784, 451];
const R = [869, 462];
const B = [825.5, 491.5];

const Preview = () => (
  <svg viewBox="691 366 219 234" className="block w-full" aria-hidden="true">
    <LoadFace from={[[723, 492], [784, 467]]} to={[[722, 477], [784, 457]]} flip />
    <LoadFace from={[[784, 467], [869, 480]]} to={[[784, 457], [868, 467]]} flip />
    <LoadFace from={[[720, 450.5], [784, 434.5]]} to={[[721, 466], [784, 449]]} />
    <LoadFace from={[[784, 434.5], [870, 442.5]]} to={[[784, 449], [870, 457]]} />
    <LoadFace from={[[720, 450.5], [826, 465]]} to={[[721, 466], [826, 484]]} />
    <LoadFace from={[[826, 465], [870, 442.5]]} to={[[826, 484], [870, 457]]} n={4} />
    <LoadFace from={[[723, 492], [825, 515.5]]} to={[[722, 477], [826, 498]]} flip />
    <LoadFace from={[[825, 515.5], [869, 480]]} to={[[826, 498], [868, 467]]} n={4} flip />
    <path d={`M${L}L${T}L${R}L${B}Z`} fill="none" stroke="#fff" strokeWidth="5" />
    <path d={`M${L}L${T}L${R}L${B}Z`} fill="none" stroke="#333" strokeWidth="2" />
    {[L, T, R, B].map(([x, y]) => (
      <Dot key={x} x={x} y={y} c="#900c0c" />
    ))}
    <g fontSize="9" fill="#8c8c8c" textAnchor="middle" fontFamily="Liberation Sans, sans-serif">
      <text x="721" y="443">2.50</text>
      <text x="785" y="428">2.50</text>
      <text x="871" y="436">2.50</text>
      <text x="827" y="458">2.50</text>
      <g fill="#b4b4b4">
        <text x="785" y="481">2.50</text>
        <text x="724" y="507">2.50</text>
        <text x="869" y="494">2.50</text>
        <text x="826" y="530">2.50</text>
      </g>
    </g>
  </svg>
);

/* ---------- dialogs ---------- */

const sizes = [
  { id: 'espacio', label: <>Espacio:</>, value: '0.200', button: 'plain' },
  { id: 'rayado', label: <Key text="Rayado:" />, value: '1.000', button: 'plain' },
  {
    id: 'carga',
    label: (
      <>
        <Key text="1" />
        {'  [kN/m'}
        <sup className="text-[8px]">2</sup>]:
      </>
    ),
    value: '0.5',
    button: 'framed',
  },
  { id: 'flecha', label: <Key text="Tamaño de flecha:" />, value: '3' },
];

const DisplayDialog = () => (
  <Frame place="top-[242px] left-[76px] w-[857px] pr-[3px] pb-1">
    <div className="bg-[#f0f0f0]">
      <div className="flex h-[31px] items-center justify-between bg-white pr-1 pl-[9px] font-['Noto_Sans','Open_Sans',sans-serif] text-[#8e8e8e]">
        <h2>Propiedades de visualización - Standard - White</h2>
        <CloseButton light />
      </div>
      <div className="px-[10px] pt-2 pb-[9px]">
        <div className="flex gap-2">
          <div className="flex w-[344px] shrink-0 flex-col">
            <GroupTitle>Categoría</GroupTitle>
            <CategoryTree />
          </div>
          <div className="flex min-w-0 flex-1 flex-col gap-[11px]">
            <div>
              <div role="tablist" className="flex items-end">
                <button type="button" role="tab" aria-selected="true" className="relative -mb-px h-[21px] w-[53px] border border-b-0 border-[#dcdcdc] bg-white pb-0.5">
                  Pantalla
                </button>
                <button type="button" role="tab" aria-selected="false" className="h-[18px] w-[43px] border border-b-0 border-l-0 border-[#dcdcdc] bg-[#f0f0f0]">
                  Informe
                </button>
              </div>
              <div className="border border-[#dcdcdc] bg-white pt-2 pr-[6px] pb-[5px] pl-[5px]">
                <GroupTitle>Cargas - Cargas generadas - Cargas generadas</GroupTitle>
                <div className="mt-px flex h-[447px] border-r border-b border-[#a9a9ee] bg-[#f0f4f9]">
                  <form className="w-[244px] shrink-0 pt-1 pl-px">
                    <div className="flex items-center">
                      <label htmlFor="color" className="w-[106px]"><Key text="Color de línea +/- :" /></label>
                      <ColorSelect id="color" swatch="bg-[#a3a3a6]" name="Gris" />
                      <span className="w-6" />
                      <ColorSelect label="Color de línea negativo" swatch="bg-[#c0c0c0]" name="Gris claro" />
                    </div>
                    <div className="mt-1 flex items-center">
                      <label htmlFor="tipo" className="w-[106px]"><Key text="Tipo de línea:" /></label>
                      <span className="grid h-[21px] w-[129px] border border-[#adadad] bg-[#e1e1e1]">
                        <select id="tipo" className="w-full appearance-none pl-0.5 [grid-area:1/1]">
                          <option>Continua</option>
                        </select>
                        <Chevron />
                      </span>
                    </div>
                    <div className="mt-[6px] flex items-center">
                      <label htmlFor="espesor" className="w-[106px]"><Key text="Espesor de línea:" at={2} /></label>
                      <Spin id="espesor" value="1" size="w-[53px]" />
                    </div>
                    <div className="mt-[10px] mr-[10px]"><Rule /></div>
                    <h4 className="mt-2 leading-[14px]">Valores</h4>
                    <fieldset className="mt-2 flex">
                      <legend className="float-left w-[106px] leading-[14px]"><Key text="Alineación:" at={8} /></legend>
                      <div className="grid grid-cols-[repeat(3,13px)] gap-x-[5px] gap-y-[6px]">
                        {Array.from({ length: 9 }, (_, i) => (
                          <input
                            key={i}
                            type="radio"
                            name="alineacion"
                            aria-label={`Alineación ${i + 1}`}
                            defaultChecked={i === 1}
                            className="size-[13px] appearance-none rounded-full border border-[#333] bg-white checked:bg-[radial-gradient(circle,#333_0_3px,#fff_4px)]"
                          />
                        ))}
                      </div>
                    </fieldset>
                    <div className="mt-[38px] mr-[10px]"><Rule /></div>
                    <h4 className="mt-[9px] leading-[14px]">Posición / rayado / tamaño</h4>
                    <div className="mt-[3px] flex flex-col gap-[3px]">
                      {sizes.map((s) => (
                        <div key={s.id} className="flex h-[21px] items-center">
                          <label htmlFor={s.id} className="w-[106px] whitespace-pre">{s.label}</label>
                          <Spin id={s.id} value={s.value} />
                          {s.button && (
                            <>
                              <span className="w-9 pl-[5px]">[m]</span>
                              <IconButton name="details" label="Detalles" framed={s.button === 'framed'} />
                            </>
                          )}
                        </div>
                      ))}
                    </div>
                  </form>
                  <div className="flex min-w-0 flex-1 flex-col justify-between pt-1 pr-0.5 pb-[3px]">
                    <div className="bg-white">
                      <p className="pt-[5px] pl-[5px] leading-[14px]">
                        CC1
                        <br />
                        Cargas [kN/m^2]
                      </p>
                      <Preview />
                    </div>
                    <div className="flex justify-end gap-[5px]">
                      <IconButton name="fontColors" label="Fuentes y colores" />
                      <IconButton name="copyPage" label="Copiar página" />
                    </div>
                  </div>
                </div>
              </div>
            </div>
            <div className="flex gap-2">
              <div className="h-[46px] w-[314px] border-r border-b border-[#a9a9ee] bg-[#f0f4f9]">
                <GroupTitle>Configuración idéntica</GroupTitle>
                <label className="flex items-center gap-[3px] pt-2 pl-px">
                  <input type="checkbox" className="size-[13px] appearance-none border border-[#333] bg-white" />
                  <span><Key text="Para pantalla e informe" at={11} /></span>
                </label>
              </div>
              <div className="flex-1 border border-t-[#dce6f4] border-r-[#a9a9ee] border-b-[#a9a9ee] border-l-[#dce6f4] bg-[#f0f4f9]" />
            </div>
          </div>
        </div>
        <div className="mt-2"><Rule /></div>
        <div className="mt-[11px] flex">
          <div className="flex flex-1 gap-[10px]">
            <IconButton name="help" label="Ayuda" />
            <IconButton name="edit" label="Comentario" />
            <IconButton name="copyPage" label="Copiar" />
          </div>
          <div className="flex gap-[9px]">
            <PushButton primary>Aceptar</PushButton>
            <PushButton>Cancelar</PushButton>
          </div>
        </div>
      </div>
    </div>
    <svg viewBox="0 0 12 12" className="absolute right-1 bottom-1 size-3" stroke="#a8a8a8" aria-hidden="true">
      <path d="M1 12L12 1M5 12l7-7M9 12l3-3" />
    </svg>
  </Frame>
);

const SizeDialog = () => {
  const first = useRef(null);
  useEffect(() => {
    first.current.focus();
    first.current.select();
  }, []);

  return (
    <Frame place="top-[644px] left-[162px] w-[288px]">
      <div className="bg-[#f0f0f0]">
        <div className="flex h-[26px] items-center justify-between bg-white pr-1 pl-0.5 font-['Noto_Sans','Open_Sans',sans-serif] text-black">
          <h2>Tamaño</h2>
          <CloseButton />
        </div>
        <div className="px-2 pt-2 pb-2">
          <div className="h-[148px] border-r border-b border-[#a9a9ee] bg-[#f0f4f9]">
            <GroupTitle>Configuración de límites relativos</GroupTitle>
            <div className="flex flex-col gap-[5px] pt-[5px] pl-px">
              <div className="flex items-center">
                <label htmlFor="minimo" className="w-16">Mínimo:</label>
                <Spin id="minimo" value="0.1" size="w-[75px]" focused inputRef={first} />
                <span className="pl-[5px]">[%]</span>
              </div>
              <div className="flex items-center">
                <label htmlFor="maximo" className="w-16">Máximo:</label>
                <Spin id="maximo" value="30.0" size="w-[75px]" />
                <span className="pl-[5px]">[%]</span>
              </div>
            </div>
            <p className="pt-[21px] pl-px leading-[13px]">
              Nota:
              <br />
              Los límites mínimo y máximo para la pantalla con
              <br />
              respecto a las máximas dimensiones del modelo
              <br />
              completo se introducen aquí.
            </p>
          </div>
          <div className="mt-[9px]"><Rule /></div>
          <div className="mt-[11px] flex">
            <div className="flex-1"><IconButton name="help" label="Ayuda" /></div>
            <div className="flex gap-[10px]">
              <PushButton primary>Aceptar</PushButton>
              <PushButton>Cancelar</PushButton>
            </div>
          </div>
        </div>
      </div>
    </Frame>
  );
};

const Pointer = () => (
  <svg className="pointer-events-none absolute inset-0 size-full drop-shadow-[3px_3px_2px_rgba(0,0,0,0.35)]" aria-hidden="true">
    <path d="M652 633L462 694" stroke="#0000ff" strokeWidth="3" />
    <path d="M451 698l14-12 5 13z" fill="#0000ff" />
  </svg>
);

export default function App() {
  return (
    <div className="relative flex h-screen flex-col overflow-hidden bg-[#d0d4dd] font-['Noto_Sans','Open_Sans',sans-serif]">
      <Header />
      <div className="flex min-h-0 flex-1">
        <Navigator />
        <Canvas />
      </div>
      <div className="font-['Liberation_Sans',Arial,sans-serif] text-[11px] leading-[14px] text-black">
        <DisplayDialog />
        <Pointer />
        <SizeDialog />
      </div>
    </div>
  );
}
